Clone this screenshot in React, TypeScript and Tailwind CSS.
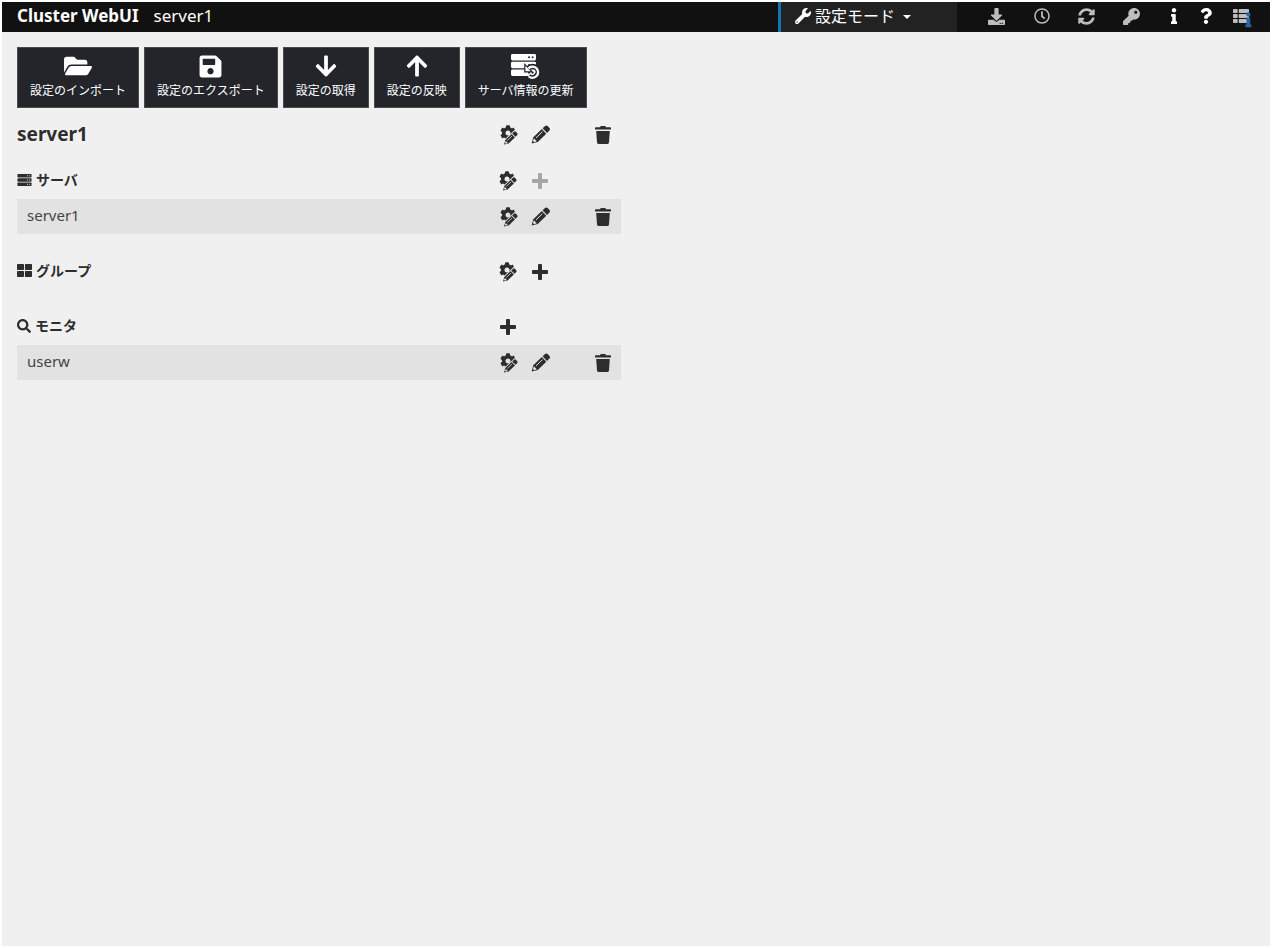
import type { ReactNode } from "react";
import {
  FaArrowDown,
  FaArrowUp,
  FaCog,
  FaDownload,
  FaFolderOpen,
  FaKey,
  FaInfo,
  FaQuestion,
  FaRegClock,
  FaSave,
  FaSearch,
  FaSyncAlt,
  FaThLarge,
  FaThList,
  FaWrench,
} from "react-icons/fa";

function ServerBars({ className, hole }: { className: string; hole: string }) {
  return (
    <svg viewBox="0 0 26 22" className={className} aria-hidden="true">
      {[0, 7.75, 15.5].map((y) => (
        <g key={y}>
          <rect x="0" y={y} width="26" height="6.5" rx="1.4" fill="currentColor" />
          <circle cx="18.6" cy={y + 3.2} r="1" fill={hole} />
          <circle cx="22.4" cy={y + 3.2} r="1" fill={hole} />
        </g>
      ))}
    </svg>
  );
}

function ServerRefreshIcon() {
  return (
    <svg viewBox="0 0 32 26" className="h-[26px] w-8" aria-hidden="true">
      {[1, 8.75, 16.5].map((y) => (
        <g key={y}>
          <rect x="1" y={y} width="25" height="6.5" rx="1.4" fill="#fff" />
          <circle cx="19" cy={y + 3.2} r="1" fill="#23252b" />
          <circle cx="22.6" cy={y + 3.2} r="1" fill="#23252b" />
        </g>
      ))}
      <path d="M18.4 15A5.6 5.6 0 1 1 18.6 23" fill="none" stroke="#23252b" strokeWidth="5" />
      <path d="M14.8 11.4v7.4h7.4z" fill="#fff" stroke="#23252b" strokeWidth="1.2" />
      <path d="M18.4 15.4A5.6 5.6 0 1 1 18.6 23.2" fill="none" stroke="#fff" strokeWidth="2.3" />
    </svg>
  );
}

function PencilShape({ line }: { line: string }) {
  return (
    <g transform="translate(0.6 18.4) rotate(-44)">
      <path d="M0 0 5.5-3.2H17.3V3.2H5.5z" fill="currentColor" />
      <path d="M18.4-3.2H21.4Q23.6-3.2 23.6-1V1Q23.6 3.2 21.4 3.2H18.4z" fill="currentColor" />
      <path d="M2.7-.9 5.2-2V2L2.7.9z" fill={line} />
      <path d="M7-.9H16" stroke={line} strokeWidth=".9" />
    </g>
  );
}

function PencilIcon({ line }: { line: string }) {
  return (
    <svg viewBox="0 0 20 20" className="size-5" aria-hidden="true">
      <PencilShape line={line} />
    </svg>
  );
}

function GearPencilIcon({ halo }: { halo: string }) {
  return (
    <svg viewBox="0 0 20 22" className="h-[22px] w-5" aria-hidden="true">
      <FaCog x="1" y="1" width="17" height="17" />
      <g transform="translate(4.6 7) scale(.74)">
        <path
          d="M0 0 5.5-3.2H23.6V3.2H5.5z"
          transform="translate(0.6 18.4) rotate(-44)"
          fill={halo}
          stroke={halo}
          strokeWidth="2.4"
          strokeLinejoin="round"
        />
        <PencilShape line={halo} />
      </g>
    </svg>
  );
}

function PlusIcon() {
  return (
    <svg viewBox="0 0 16 16" className="size-4" aria-hidden="true">
      <path
        d="M7 0h2q1 0 1 1v5h5q1 0 1 1v2q0 1-1 1h-5v5q0 1-1 1H7q-1 0-1-1v-5H1Q0 10 0 9V7q0-1 1-1h5V1q0-1 1-1z"
        fill="currentColor"
      />
    </svg>
  );
}

function TrashIcon() {
  return (
    <svg viewBox="0 0 16 18" className="h-[18px] w-4" aria-hidden="true">
      <path
        d="M5 1.2Q5.3 0 6.4 0h3.2Q10.7 0 11 1.2h4.2q.8 0 .8.8v1.5H0V2q0-.8.8-.8zM1.2 4.9h13.6L14 16.6Q13.9 18 12.6 18H3.4Q2.1 18 2 16.6z"
        fill="currentColor"
      />
    </svg>
  );
}

function ServerListIcon() {
  return (
    <svg viewBox="0 0 20 20" className="h-5 w-5" aria-hidden="true">
      <FaThList x="1" y="0" width="17" height="17" />
      <g fill="#2c65a5">
        <circle cx="16.4" cy="6.4" r="2.1" />
        <path d="M14 9.4h4.2v7.2h1.2v2.6H13.4v-2.6h1.2V12H14z" />
      </g>
    </svg>
  );
}

function Tool({ label, icon }: { label: string; icon: ReactNode }) {
  return (
    <button
      type="button"
      className="flex h-[61px] flex-col items-center border border-[#4a4b4f] bg-[#23252b] px-3 pt-[5px] text-xs text-white"
    >
      <span className="flex h-[26px] items-center justify-center">{icon}</span>
      <span className="mt-1 whitespace-nowrap leading-4">{label}</span>
    </button>
  );
}

type Action = "settings" | "edit" | "add" | "add-disabled" | "none" | "remove";

function ActionCell({ action, halo }: { action: Action; halo: string }) {
  const cell = "flex h-8 w-8 items-center justify-center";
  switch (action) {
    case "settings":
      return (
        <button type="button" aria-label="プロパティ" className={cell}>
          <GearPencilIcon halo={halo} />
        </button>
      );
    case "edit":
      return (
        <button type="button" aria-label="編集" className={cell}>
          <PencilIcon line={halo} />
        </button>
      );
    case "add":
      return (
        <button type="button" aria-label="追加" className={cell}>
          <PlusIcon />
        </button>
      );
    case "add-disabled":
      return (
        <button type="button" aria-label="追加" disabled className={cell + " text-[#a6a6a6]"}>
          <PlusIcon />
        </button>
      );
    case "remove":
      return (
        <button type="button" aria-label="削除" className={cell}>
          <TrashIcon />
        </button>
      );
    default:
      return <span className="w-[30px]" />;
  }
}

function Actions({ items, halo = "#f0f0f0" }: { items: Action[]; halo?: string }) {
  return (
    <div className="flex shrink-0 items-center">
      {items.map((action, i) => (
        <ActionCell key={i} action={action} halo={halo} />
      ))}
    </div>
  );
}

const ITEM_ACTIONS: Action[] = ["settings", "edit", "none", "remove"];

function ItemRow({ name }: { name: string }) {
  return (
    <li className="grid h-[35px] grid-cols-[1fr_128px] items-center bg-[#e2e2e2] pl-2.5">
      <span className="pb-1 text-[15px] leading-5 text-[#444]">{name}</span>
      <Actions items={ITEM_ACTIONS} halo="#e2e2e2" />
    </li>
  );
}

function SectionHead({ icon, title, actions }: { icon: ReactNode; title: string; actions: Action[] }) {
  return (
    <div className="grid h-[37px] grid-cols-[1fr_129px] items-center">
      <h2 className="flex items-center gap-1 pb-0.5 text-sm font-bold">
        {icon}
        {title}
      </h2>
      <Actions items={actions} />
    </div>
  );
}

function BarButton({ label, className, children }: { label: string; className: string; children: ReactNode }) {
  return (
    <button type="button" aria-label={label} className={"flex h-full items-center justify-center " + className}>
      {children}
    </button>
  );
}

export default function App() {
  return (
    <div className="min-h-screen border-2 border-white bg-[#f0f0f0] font-['Noto_Sans','Noto_Sans_CJK_JP',sans-serif] text-[#2d2d2d]">
      <header className="flex h-[30px] items-center bg-[#111] pb-0.5 text-white">
        <h1 className="pl-[15px] text-[17px] font-bold leading-6">Cluster WebUI</h1>
        <span className="ml-[15px] text-[17px] leading-6">server1</span>
        <div className="relative ml-auto flex h-[30px] w-[179px] items-center self-start border-l-[3px] border-[#0b78b5] bg-[#222] pb-0.5 pl-3.5">
          <FaWrench className="size-4 shrink-0" />
          <select aria-label="モード" className="ml-1 w-full appearance-none bg-transparent text-base leading-6 outline-none">
            <option>設定モード</option>
          </select>
          <svg viewBox="0 0 8 4" className="pointer-events-none absolute right-[46px] top-[13px] h-1 w-2" aria-hidden="true">
            <path d="M0 0h8L4 4z" fill="currentColor" />
          </svg>
        </div>
        <div className="ml-[17px] mr-1 flex h-full text-[#bdbdbd]">
          <BarButton label="ダウンロード" className="w-[45px]">
            <FaDownload className="size-[17px]" />
          </BarButton>
          <BarButton label="時刻情報" className="w-[45px]">
            <FaRegClock className="size-4" />
          </BarButton>
          <BarButton label="更新" className="w-[45px]">
            <FaSyncAlt className="size-[17px]" />
          </BarButton>
          <BarButton label="認証" className="w-[45px]">
            <FaKey className="size-[17px]" />
          </BarButton>
        </div>
        <div className="flex h-full pr-2">
          <BarButton label="情報" className="w-8">
            <FaInfo className="size-4" />
          </BarButton>
          <BarButton label="ヘルプ" className="w-8">
            <FaQuestion className="size-4" />
          </BarButton>
          <BarButton label="サーバ一覧" className="w-10 pt-1 text-[#bdbdbd]">
            <ServerListIcon />
          </BarButton>
        </div>
      </header>

      <main className="p-[15px]">
        <div className="flex flex-wrap gap-[5px]">
          <Tool label="設定のインポート" icon={<FaFolderOpen className="size-7" />} />
          <Tool label="設定のエクスポート" icon={<FaSave className="size-[25px]" />} />
          <Tool label="設定の取得" icon={<FaArrowDown className="size-6" />} />
          <Tool label="設定の反映" icon={<FaArrowUp className="size-6" />} />
          <Tool label="サーバ情報の更新" icon={<ServerRefreshIcon />} />
        </div>

        <div className="w-full max-w-[604px]">
          <div className="mt-2.5 grid h-[34px] grid-cols-[1fr_128px] items-center">
            <h2 className="pb-0.5 text-[19px] font-bold leading-6">server1</h2>
            <Actions items={ITEM_ACTIONS} />
          </div>

          <section className="mt-2.5">
            <SectionHead
              icon={<ServerBars className="h-3 w-[15px]" hole="#f0f0f0" />}
              title="サーバ"
              actions={["settings", "add-disabled"]}
            />
            <ul>
              <ItemRow name="server1" />
            </ul>
          </section>

          <section className="mt-[19px]">
            <SectionHead icon={<FaThLarge className="size-[15px]" />} title="グループ" actions={["settings", "add"]} />
          </section>

          <section className="mt-[18px]">
            <SectionHead icon={<FaSearch className="size-3.5" />} title="モニタ" actions={["add"]} />
            <ul>
              <ItemRow name="userw" />
            </ul>
          </section>
        </div>
      </main>
    </div>
  );
}
